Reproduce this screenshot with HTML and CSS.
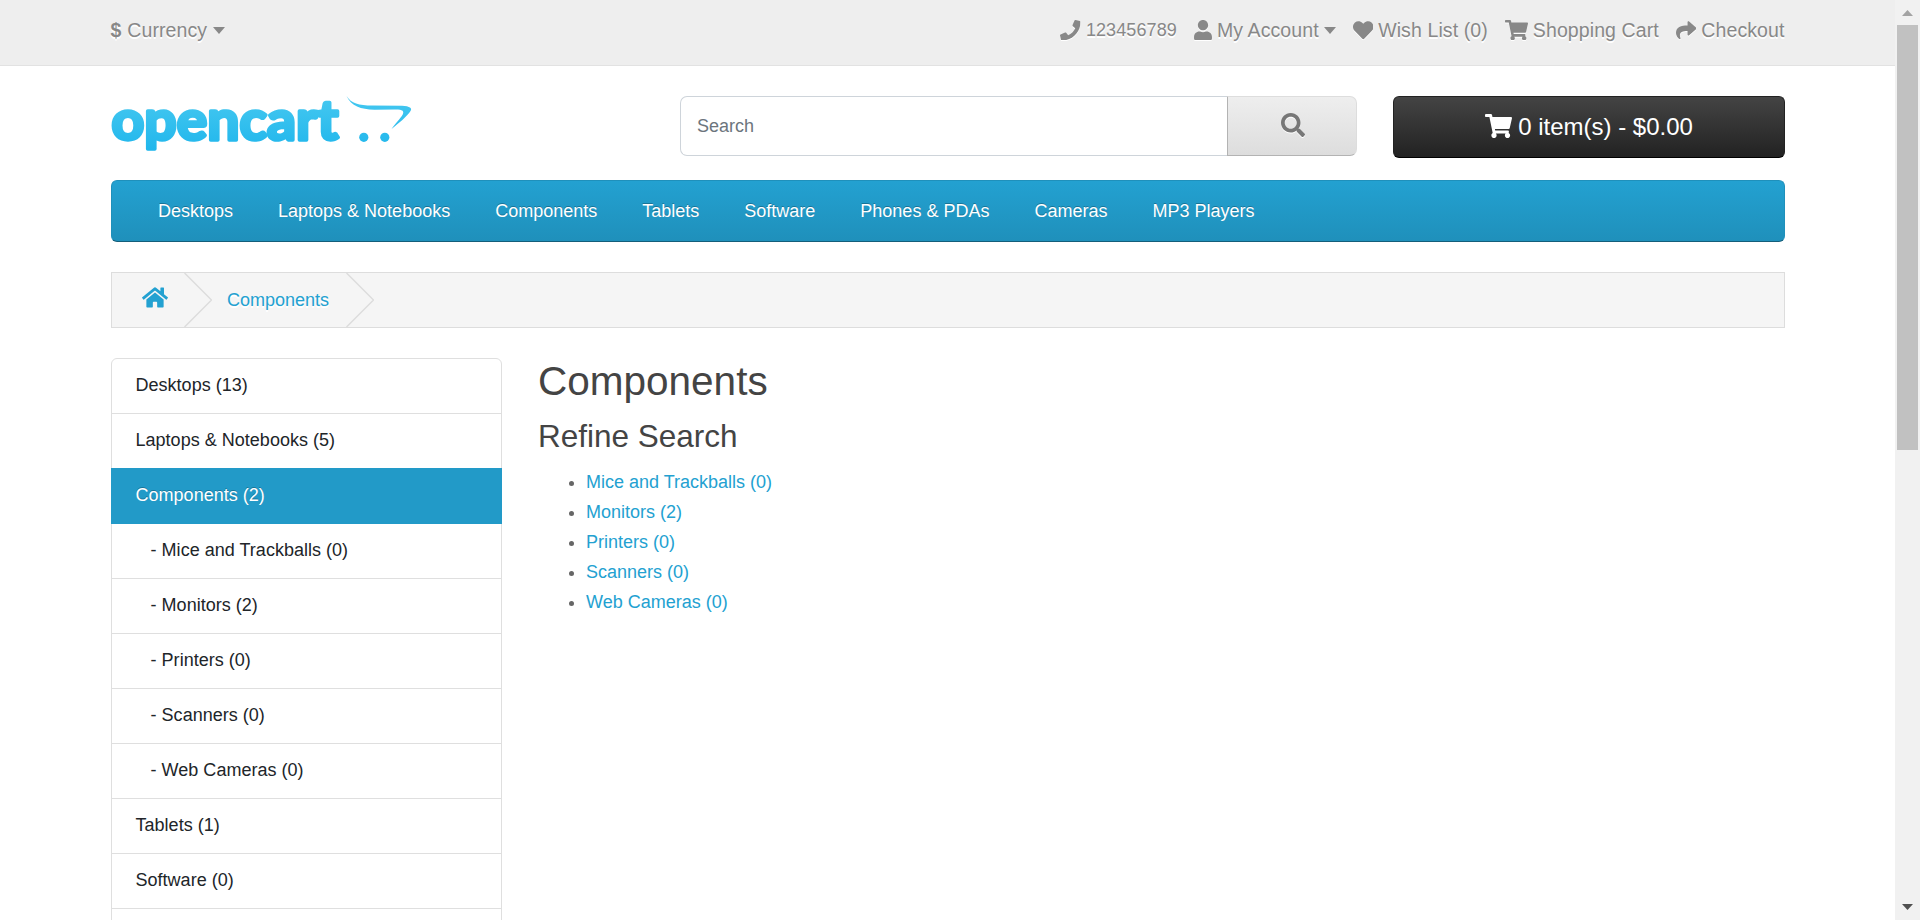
FILE: index.html
```html
<!DOCTYPE html>
<html lang="en">
<head>
<meta charset="utf-8">
<title>Components</title>
<link rel="stylesheet" href="styles.css">
</head>
<body>
<svg class="defs" width="0" height="0" aria-hidden="true">
  <symbol id="phone" viewBox="0 0 512 512"><path d="M493.4 24.6l-104-24c-11.3-2.6-22.9 3.3-27.5 13.9l-48 112c-4.2 9.8-1.4 21.3 6.9 28l60.6 49.6c-36 76.7-98.9 140.5-177.2 177.2l-49.6-60.6c-6.8-8.3-18.2-11.1-28-6.9l-112 48C3.9 366.5-2 378.1.6 389.4l24 104C27.1 504.2 36.7 512 48 512c256.1 0 464-207.5 464-464 0-11.2-7.7-20.9-18.6-23.4z"/></symbol>
  <symbol id="user" viewBox="0 0 448 512"><path d="M224 256c70.7 0 128-57.3 128-128S294.7 0 224 0 96 57.3 96 128s57.3 128 128 128zm89.6 32h-16.7c-22.2 10.2-46.9 16-72.9 16s-50.6-5.8-72.9-16h-16.7C60.2 288 0 348.2 0 422.4V464c0 26.5 21.5 48 48 48h352c26.5 0 48-21.5 48-48v-41.6c0-74.2-60.2-134.4-134.4-134.4z"/></symbol>
  <symbol id="heart" viewBox="0 0 512 512"><path d="M462.3 62.6C407.5 15.9 326 24.3 275.7 76.2L256 96.5l-19.7-20.3C186.1 24.3 104.5 15.9 49.7 62.6c-62.8 53.6-66.1 149.8-9.9 207.9l193.5 199.8c12.5 12.9 32.8 12.9 45.3 0l193.5-199.8c56.3-58.1 53-154.3-9.8-207.9z"/></symbol>
  <symbol id="cart" viewBox="0 0 576 512"><path d="M528.12 301.319l47.273-208C578.806 78.301 567.391 64 551.99 64H159.208l-9.166-44.81C147.758 8.021 137.93 0 126.529 0H24C10.745 0 0 10.745 0 24v16c0 13.255 10.745 24 24 24h69.883l70.248 343.435C147.325 417.1 136 435.222 136 456c0 30.928 25.072 56 56 56s56-25.072 56-56c0-15.674-6.447-29.835-16.824-40h209.647C430.447 426.165 424 440.326 424 456c0 30.928 25.072 56 56 56s56-25.072 56-56c0-22.172-12.888-41.332-31.579-50.405l5.517-24.276c3.413-15.018-8.002-29.319-23.403-29.319H218.117l-6.545-32h293.145c11.206 0 20.92-7.754 23.403-18.681z"/></symbol>
  <symbol id="share" viewBox="0 0 512 512"><path d="M503.691 189.836L327.687 37.851C312.281 24.546 288 35.347 288 56.015v80.053C127.371 137.907 0 170.1 0 322.326c0 61.441 39.581 122.309 83.333 154.132 13.653 9.931 33.111-2.533 28.077-18.631C66.066 312.814 132.917 274.316 288 272.085V360c0 20.7 24.3 31.453 39.687 18.164l176.004-152c11.071-9.562 11.086-26.753 0-36.328z"/></symbol>
  <symbol id="search" viewBox="0 0 512 512"><path d="M505 442.7L405.3 343c-4.5-4.5-10.6-7-17-7H372c27.6-35.3 44-79.7 44-128C416 93.1 322.9 0 208 0S0 93.1 0 208s93.1 208 208 208c48.3 0 92.7-16.4 128-44v16.3c0 6.4 2.5 12.5 7 17l99.7 99.7c9.4 9.4 24.6 9.4 33.9 0l28.3-28.3c9.4-9.4 9.4-24.6.1-34zM208 336c-70.7 0-128-57.2-128-128 0-70.7 57.2-128 128-128 70.7 0 128 57.2 128 128 0 70.7-57.2 128-128 128z"/></symbol>
  <symbol id="home" viewBox="0 0 576 512"><path d="M280.37 148.26L96 300.11V464a16 16 0 0 0 16 16l112.06-.29a16 16 0 0 0 15.92-16V368a16 16 0 0 1 16-16h64a16 16 0 0 1 16 16v95.64a16 16 0 0 0 16 16.05L464 480a16 16 0 0 0 16-16V300L295.67 148.26a12.19 12.19 0 0 0-15.3 0zM571.6 251.47L488 182.56V44.05a12 12 0 0 0-12-12h-56a12 12 0 0 0-12 12v72.61L318.47 43a48 48 0 0 0-61 0L4.34 251.47a12 12 0 0 0-1.6 16.9l25.5 31A12 12 0 0 0 45.15 301l235.22-193.74a12.19 12.19 0 0 1 15.3 0L530.9 301a12 12 0 0 0 16.9-1.6l25.5-31a12 12 0 0 0-1.7-16.93z"/></symbol>
</svg>
<div class="window">
  <div class="page">
    <nav class="top">
      <div class="container top-row">
        <a class="top-item"><strong>$</strong><span>Currency</span><i class="caret"></i></a>
        <div class="top-links">
          <a class="top-item"><svg class="icon"><use href="#phone"/></svg><span class="number">123456789</span></a>
          <a class="top-item"><svg class="icon icon-user"><use href="#user"/></svg><span>My Account</span><i class="caret"></i></a>
          <a class="top-item"><svg class="icon"><use href="#heart"/></svg><span>Wish List (0)</span></a>
          <a class="top-item"><svg class="icon icon-cart"><use href="#cart"/></svg><span>Shopping Cart</span></a>
          <a class="top-item"><svg class="icon"><use href="#share"/></svg><span>Checkout</span></a>
        </div>
      </div>
    </nav>

    <header class="container header">
      <svg class="logo" viewBox="0 0 301 60" role="img" aria-label="opencart">
        <defs>
          <linearGradient id="brand" gradientUnits="userSpaceOnUse" x1="0" y1="0" x2="0" y2="56">
            <stop offset="0" stop-color="#46c8f0"/><stop offset="1" stop-color="#1fb6ec"/>
          </linearGradient>
        </defs>
        <text class="wordmark" x="0.5" y="44" textLength="227" lengthAdjust="spacingAndGlyphs">opencart</text>
        <g fill="url(#brand)">
          <path d="M235.500 0C240.500 7.500 247.500 9.500 261.500 9.500L291 9.700C299 10 301.500 12.500 299.500 15C296.500 20 288 27 280.500 33C286 25.500 291.500 20.500 292.200 17C292.700 14 289.500 13.500 283.500 13.500L263.500 13.700C249.500 13.200 240.500 10.500 235.500 0Z"/>
          <circle cx="252.800" cy="41.300" r="4.600"/><circle cx="273.800" cy="41.300" r="4.600"/>
        </g>
      </svg>
      <div class="search">
        <input class="search-input" type="text" placeholder="Search">
        <button class="search-button" aria-label="Search"><svg class="search-icon"><use href="#search"/></svg></button>
      </div>
      <button class="cart-button"><svg class="cart-icon"><use href="#cart"/></svg><span>0 item(s) - $0.00</span></button>
    </header>

    <div class="container">
      <nav class="menu">
        <a>Desktops</a><a>Laptops &amp; Notebooks</a><a>Components</a><a>Tablets</a><a>Software</a><a>Phones &amp; PDAs</a><a>Cameras</a><a>MP3 Players</a>
      </nav>
      <div class="breadcrumb">
        <a class="crumb crumb-home"><svg class="home-icon"><use href="#home"/></svg></a>
        <svg class="chevron" viewBox="0 0 28 54"><path d="M.5 0L27.500 27L.5 54"/></svg>
        <a class="crumb crumb-page">Components</a>
        <svg class="chevron" viewBox="0 0 28 54"><path d="M.5 0L27.500 27L.5 54"/></svg>
      </div>
    </div>

    <div class="container columns">
      <aside class="categories">
        <a>Desktops (13)</a>
        <a>Laptops &amp; Notebooks (5)</a>
        <a class="active">Components (2)</a>
        <a>&nbsp;&nbsp;&nbsp;- Mice and Trackballs (0)</a>
        <a>&nbsp;&nbsp;&nbsp;- Monitors (2)</a>
        <a>&nbsp;&nbsp;&nbsp;- Printers (0)</a>
        <a>&nbsp;&nbsp;&nbsp;- Scanners (0)</a>
        <a>&nbsp;&nbsp;&nbsp;- Web Cameras (0)</a>
        <a>Tablets (1)</a>
        <a>Software (0)</a>
        <a>&nbsp;</a>
      </aside>
      <main class="content">
        <h1>Components</h1>
        <h2>Refine Search</h2>
        <ul>
          <li><a>Mice and Trackballs (0)</a></li>
          <li><a>Monitors (2)</a></li>
          <li><a>Printers (0)</a></li>
          <li><a>Scanners (0)</a></li>
          <li><a>Web Cameras (0)</a></li>
        </ul>
      </main>
    </div>
  </div>
  <div class="scrollbar">
    <svg class="arrow arrow-up" viewBox="0 0 11 6"><path d="M0 6L5.500 0L11 6Z"/></svg>
    <div class="thumb"></div>
    <svg class="arrow arrow-down" viewBox="0 0 11 6"><path d="M0 0L5.500 6L11 0Z"/></svg>
  </div>
</div>
</body>
</html>
```
FILE: styles.css
```css
* { box-sizing: border-box; }
body {
  margin: 0;
  overflow: hidden;
  background: #fff;
  color: #666;
  font: 18px/27px "Liberation Sans", Arial, sans-serif;
}
svg { display: block; flex: none; }
.defs { position: absolute; }
.window { display: flex; height: 920px; overflow: hidden; }
.page { flex: 1; min-width: 0; overflow: hidden; }
.container { width: 1674px; margin: 0 0 0 110.5px; }

/* Top bar */
.top {
  height: 66px;
  background: #eee;
  border-bottom: 1px solid #e2e2e2;
  color: #888;
  font-size: 19.5px;
  letter-spacing: .1px;
  text-shadow: 0 1.5px 0 #fff;
}
.top-row { display: flex; justify-content: space-between; padding-top: 15px; }
.top-links { display: flex; gap: 17px; }
.top-item { display: flex; align-items: center; gap: 5px; height: 30px; white-space: nowrap; }
.top-row > .top-item { gap: 5.800px; }
.number { font-size: 18px; padding-top: 1px; }
.icon { width: 20.500px; height: 20.500px; fill: #888; filter: drop-shadow(0 1.5px 0 #fff); }
.icon-user { width: 18px; }
.icon-cart { width: 23px; }
.caret {
  border: 6.500px solid transparent;
  border-top-color: #888;
  border-top-width: 7px;
  border-bottom: 0;
}

/* Header */
.header { display: flex; align-items: flex-start; padding-top: 30px; height: 114px; }
.logo { width: 301px; height: 60px; margin-right: 268.500px; overflow: visible; }
.wordmark {
  font-family: Lato, sans-serif;
  font-weight: 700;
  font-size: 55px;
  fill: url(#brand);
  stroke: url(#brand);
  stroke-width: 3.500px;
  stroke-linejoin: round;
}
.search { display: flex; width: 677px; height: 60px; margin-right: 36px; }
.search-input {
  flex: 1;
  min-width: 0;
  padding: 0 16px;
  border: 1px solid #ced4da;
  border-right: 0;
  border-radius: 7px 0 0 7px;
  font: 18px "Liberation Sans", Arial, sans-serif;
  color: #666;
}
.search-input::placeholder { color: #6c757d; }
.search-button {
  display: flex;
  align-items: center;
  justify-content: center;
  width: 130px;
  padding: 0;
  border: 1px solid;
  border-color: #ddd #ddd #b3b3b3 #b3b3b3;
  border-radius: 0 7px 7px 0;
  background: linear-gradient(#eee, #ddd);
}
.search-icon { width: 24px; height: 24px; fill: #777; filter: drop-shadow(0 1.5px 0 #fff); margin: 0 0 2px 1px; }
.cart-button {
  display: flex;
  align-items: center;
  justify-content: center;
  gap: 6.500px;
  width: 391.500px;
  height: 62px;
  padding: 0;
  border: 1px solid;
  border-color: #222 #222 #000;
  border-radius: 6px;
  background: linear-gradient(#444, #222);
  color: #fff;
  font: 24px "Liberation Sans", Arial, sans-serif;
}
.cart-icon { width: 27px; height: 24px; fill: #fff; margin-bottom: 2px; }

/* Main menu */
.menu {
  display: flex;
  align-items: center;
  gap: 45px;
  height: 62px;
  padding-left: 46.500px;
  border: 1px solid;
  border-color: #1f90bb #1f90bb #145e7a;
  border-radius: 6px;
  background: linear-gradient(#23a1d1, #1f90bb);
  color: #fff;
  text-shadow: 0 -1.5px 0 rgba(0, 0, 0, .25);
}
.breadcrumb {
  display: flex;
  height: 56px;
  margin-top: 30px;
  border: 1px solid #ddd;
  background: #f5f5f5;
  color: #23a1d1;
}
.crumb { display: flex; align-items: center; text-shadow: 0 1.5px 0 #fff; }
.crumb-home { width: 72.500px; padding-left: 30px; }
.crumb-page { width: 134px; padding-left: 15px; }
.home-icon { width: 26px; height: 23px; fill: #23a1d1; margin-bottom: 5px; }
.chevron { width: 28px; height: 54px; fill: none; stroke: #ddd; stroke-width: 1.500px; }

/* Body columns */
.columns { display: flex; gap: 36px; margin-top: 30px; align-items: flex-start; }
.categories {
  width: 391.500px;
  border: 1px solid #dfdfdf;
  border-radius: 6px;
  color: #212529;
}
.categories a {
  display: block;
  height: 55px;
  padding: 13px 24px;
  border-bottom: 1px solid #dfdfdf;
  white-space: nowrap;
  letter-spacing: .02px;
}
.categories .active {
  height: 56px;
  margin: -1px -1px 0;
  padding: 14px 25px;
  border-bottom: 0;
  background: #229ac8;
  color: #fff;
  text-shadow: 0 -1.5px 0 rgba(0, 0, 0, .25);
}
.content { flex: 1; }
h1, h2 { margin: 0; color: #444; font-weight: 400; }
h1 { font-size: 40.500px; line-height: 48px; margin-top: -1px; }
h2 { font-size: 31.500px; line-height: 38px; margin-top: 12px; }
.content ul { margin: 12px 0 0; padding-left: 48px; line-height: 30px; }
.content a { color: #23a1d1; }

/* Scrollbar */
.scrollbar { display: flex; flex-direction: column; align-items: center; width: 25px; padding: 10px 0; background: #f1f1f1; }
.thumb { width: 21px; height: 425px; margin-top: 9px; background: #c1c1c1; }
.arrow { width: 11px; height: 6px; }
.arrow-up { fill: #a3a3a3; }
.arrow-down { fill: #505050; margin-top: auto; }
```
